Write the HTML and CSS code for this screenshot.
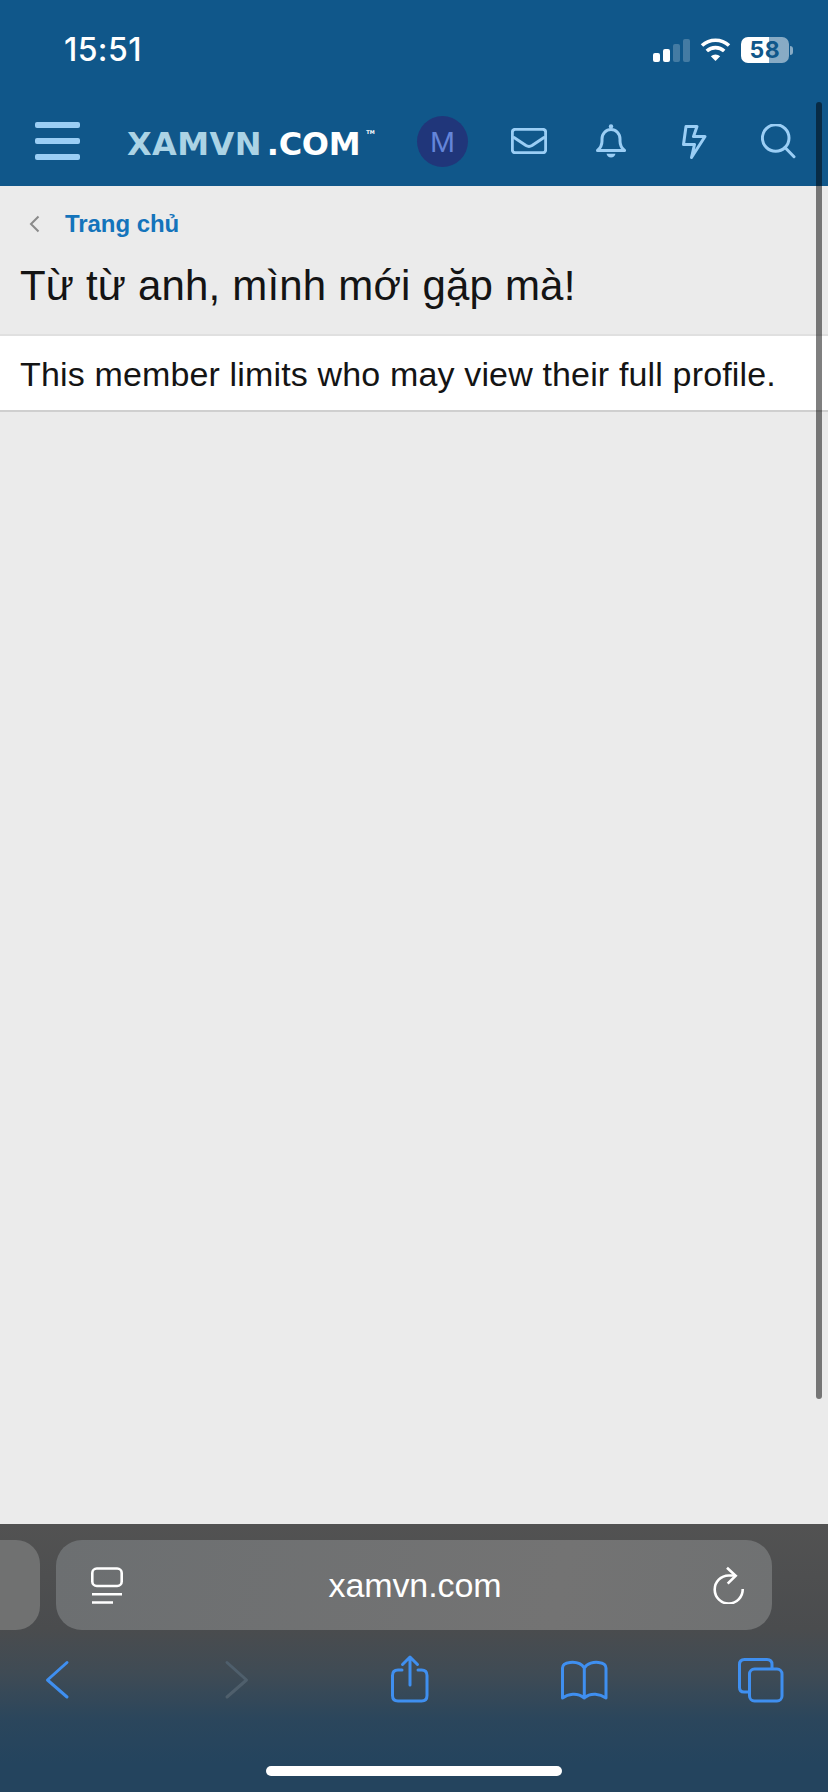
FILE: index.html
```html
<!DOCTYPE html>
<html lang="vi">
<head>
<meta charset="utf-8">
<title>XAMVN.COM</title>
<link rel="stylesheet" href="styles.css">
</head>
<body>
<div class="screen">
  <header class="top">
    <div class="status">
      <span class="time">15:51</span>
      <div class="status-icons">
        <div class="signal"><i class="b1"></i><i class="b2"></i><i class="b3"></i><i class="b4"></i></div>
        <svg class="wifi" viewBox="700 38 31 23" width="31" height="23"><path class="wifi-arc" d="M702 45.5A20 20 0 0 1 729 45.5M706.8 51A13 13 0 0 1 724.2 51"/><path class="wifi-dot" d="M710.8 56.3A7 7 0 0 1 720.2 56.3L715.5 61Z"/></svg>
        <div class="battery"><span class="battery-num">58</span></div>
        <i class="battery-nub"></i>
      </div>
    </div>
    <nav class="nav">
      <div class="burger"><i></i><i></i><i></i></div>
      <div class="logo"><span class="logo-a">XAMVN</span><span class="logo-b">.COM</span><span class="logo-tm">TM</span></div>
      <div class="avatar">M</div>
      <svg class="ico ico-mail" viewBox="511 128 36 26" width="36" height="26"><rect x="512.3" y="129.3" width="33.4" height="23.4" rx="3"/><path d="M514 137.5L526 145.5Q529 147.3 532 145.5L544 137.5"/></svg>
      <svg class="ico ico-bell" viewBox="596 124 30 34" width="30" height="34"><path d="M597.5 150.5c3-2.5 4.5-5 4.5-9.5v-2c0-5.5 4-9.5 9-9.5s9 4 9 9.5v2c0 4.500 1.500 7 4.500 9.500z"/><circle class="ico-fill" cx="611" cy="126.500" r="2.200"/><path class="ico-fill" d="M606.500 153.800h9c-.5 2.200-2.200 3.800-4.500 3.800s-4-1.600-4.500-3.800z"/></svg>
      <svg class="ico ico-bolt" viewBox="681 123 26 35" width="26" height="35"><path d="M686 125.500H697L693.500 135.500H705L691.500 156.500L694.500 143.500H683.500Z"/></svg>
      <svg class="ico ico-search" viewBox="761 124 35 35" width="35" height="35"><circle cx="775.7" cy="138" r="13.300"/><path d="M785 147.500L794 156.700"/></svg>
    </nav>
  </header>

  <main class="content">
    <div class="crumb">
      <svg class="crumb-back" viewBox="0 0 11 18" width="11" height="18"><path d="M9.500 1.500L2 9L9.500 16.500"/></svg>
      <a class="crumb-link">Trang chủ</a>
    </div>
    <h1 class="title">Từ từ anh, mình mới gặp mà!</h1>
    <div class="block">This member limits who may view their full profile.</div>
  </main>

  <footer class="safari">
    <div class="url-row">
      <div class="stub"></div>
      <div class="url">
        <svg class="url-tabs" viewBox="91 1566 32 37" width="32" height="37"><rect x="92.300" y="1567.500" width="29.400" height="17.500" rx="4.500"/><path d="M92 1593.200H122M92 1601.500H113"/></svg>
        <span class="url-text">xamvn.com</span>
        <svg class="url-reload" viewBox="711 1564 33 38" width="33" height="38"><path d="M734 1573.500H727.700A14 14 0 1 0 741.700 1587"/><path d="M726 1565.700L734.700 1573.700L726.700 1581.700"/></svg>
      </div>
    </div>
    <div class="tools">
      <svg class="tool" viewBox="27 1650 60 60" width="60" height="60"><path d="M67 1662.500L47.500 1680L67 1697"/></svg>
      <svg class="tool tool-off" viewBox="207 1650 60 60" width="60" height="60"><path d="M227 1662.500L246.500 1680L227 1697"/></svg>
      <svg class="tool" viewBox="380 1650 60 60" width="60" height="60"><path d="M402 1670H398Q392.500 1670 392.500 1675.500V1695.500Q392.500 1701 398 1701H421.500Q427 1701 427 1695.500V1675.500Q427 1670 421.500 1670H418"/><path d="M410 1685V1657.500M402.500 1664.500L410 1657L417.500 1664.500"/></svg>
      <svg class="tool" viewBox="554 1650 60 60" width="60" height="60"><path d="M584.300 1668C581 1663 575 1662 570 1662.500C565.500 1663 562.500 1664 562.500 1668V1698C568 1694 577 1692 584.300 1698C591 1692 600 1694 606 1698V1668C606 1664 603 1663 598.500 1662.500C594 1662 587 1663 584.300 1668V1698"/></svg>
      <svg class="tool" viewBox="730 1650 60 60" width="60" height="60"><path d="M748 1692H744Q739.500 1692 739.500 1687.500V1664.500Q739.500 1659.500 744.500 1659.500H767Q772 1659.500 772 1664.500V1668"/><rect x="749.500" y="1669" width="32.500" height="32" rx="5"/></svg>
    </div>
    <div class="home-row"><i class="home"></i></div>
  </footer>

  <i class="scrollbar"></i>
</div>
</body>
</html>
```

FILE: styles.css
```css
* { box-sizing: border-box; }
html, body { margin: 0; padding: 0; }
body { background: #ebebeb; font-family: "Liberation Sans", Arial, sans-serif; }
i { display: block; }

.screen {
  position: relative;
  width: 828px;
  height: 1792px;
  display: flex;
  flex-direction: column;
  overflow: hidden;
}

/* top */
.top { height: 186px; background: #10578a; color: #fff; flex: none; }
.status {
  height: 96px;
  display: flex;
  justify-content: space-between;
  padding: 30px 35px 0 64px;
}
.time { font: 500 32px/39px Inter, sans-serif; letter-spacing: .4px; }
.status-icons { display: flex; align-items: flex-start; height: 39px; padding-top: 7px; }
.signal { display: flex; align-items: flex-end; gap: 3px; height: 24px; margin-top: 1px; }
.signal i { width: 7px; border-radius: 2px; background: #fff; }
.signal .b1 { height: 9px; }
.signal .b2 { height: 13px; }
.signal .b3 { height: 18px; background: rgba(255,255,255,.22); }
.signal .b4 { height: 23px; background: rgba(255,255,255,.22); }
.wifi { margin: 1px 10px 0 10px; }
.wifi-arc { fill: none; stroke: #fff; stroke-width: 3.6; }
.wifi-dot { fill: #fff; }
.battery {
  width: 48px; height: 26px; border-radius: 7px;
  background: linear-gradient(90deg, #fff 0 28px, rgba(255,255,255,.5) 28px);
  display: flex; align-items: center; justify-content: center;
}
.battery-num { font: 700 23px/26px Inter, sans-serif; color: #10578a; letter-spacing: .6px; }
.battery-nub { width: 3px; height: 9px; margin: 9px 0 0 1px; background: rgba(255,255,255,.5); border-radius: 0 3px 3px 0; }

.nav { height: 90px; display: flex; align-items: center; padding-left: 35px; }
.burger { width: 45px; display: flex; flex-direction: column; gap: 10px; }
.burger i { height: 6px; border-radius: 2px; background: #9bcef5; }
.logo {
  width: 290px; margin-left: 47px; white-space: nowrap; padding-top: 6px;
  font: 700 32px/40px "DejaVu Sans", sans-serif;
  display: flex; align-items: baseline;
}
.logo-a { color: #abd3e5; letter-spacing: .4px; }
.logo-b { color: #fff; margin-left: 5px; letter-spacing: -.3px; }
.logo-tm { font-size: 5px; line-height: 5px; color: #fff; align-self: flex-start; margin: 6px 0 0 6px; }
.avatar {
  width: 51px; height: 51px; border-radius: 50%; flex: none;
  background: #20367a; color: #6485d9;
  font-size: 30px; line-height: 51px; text-align: center;
}
.ico { flex: none; fill: none; stroke: #9bcef5; stroke-width: 3; stroke-linejoin: round; stroke-linecap: round; }
.ico-fill { fill: #9bcef5; stroke: none; }
.ico-mail { margin-left: 43px; }
.ico-bell { margin-left: 49px; }
.ico-bolt { margin-left: 55px; }
.ico-search { margin-left: 54px; }

/* content */
.content { flex: 1; background: #ebebeb; }
.crumb { height: 76px; display: flex; align-items: center; padding: 0 0 0 29px; }
.crumb-back { fill: none; stroke: #8a8a8a; stroke-width: 2; margin-right: 25px; }
.crumb-link { font-size: 24px; font-weight: 700; color: #1474bb; letter-spacing: -.05px; }
.title { margin: 0; height: 72px; padding: 2px 0 0 20px; font-size: 42px; line-height: 44px; font-weight: 400; color: #141414; letter-spacing: .18px; }
.block {
  height: 78px; background: #fff;
  border-top: 2px solid #e0e0e0; border-bottom: 2px solid #cfcfcf;
  padding: 3px 0 0 20px;
  font-size: 34px; line-height: 71px; color: #141414; letter-spacing: .15px;
}

/* safari */
.safari {
  height: 268px; flex: none;
  background: linear-gradient(180deg, #525252 0, #4a4c4e 105px, #3f4b55 150px, #2b465c 195px, #24445e 240px);
  padding-top: 16px;
  display: flex; flex-direction: column;
}
.url-row { display: flex; height: 90px; gap: 16px; padding-right: 56px; }
.stub { width: 40px; flex: none; background: #707171; border-radius: 0 24px 24px 0; }
.url {
  flex: 1; border-radius: 26px;
  background: linear-gradient(100deg, #6c6f71 0, #737373 70%, #6f7172 100%);
  display: flex; align-items: center; justify-content: space-between;
  padding: 0 27px 0 35px;
}
.url-tabs, .url-reload { fill: none; stroke: #fff; stroke-width: 2.6; flex: none; }
.url-text { font-size: 34px; color: #fff; letter-spacing: -.1px; margin-right: 5px; }
.tools { display: grid; grid-template-columns: 180px 173px 174px 176px 60px; padding: 20px 0 0 27px; }
.tool { fill: none; stroke: #3f8ff0; stroke-width: 3; stroke-linecap: round; stroke-linejoin: round; }
.tool-off { stroke: #4f5f6c; }
.home-row { display: flex; justify-content: center; padding-top: 56px; }
.home { width: 296px; height: 10px; border-radius: 5px; background: #fff; }

.scrollbar {
  position: absolute; left: 816px; top: 102px;
  width: 6px; height: 1297px; border-radius: 3px;
  background: rgba(0,0,0,.5);
}
```
